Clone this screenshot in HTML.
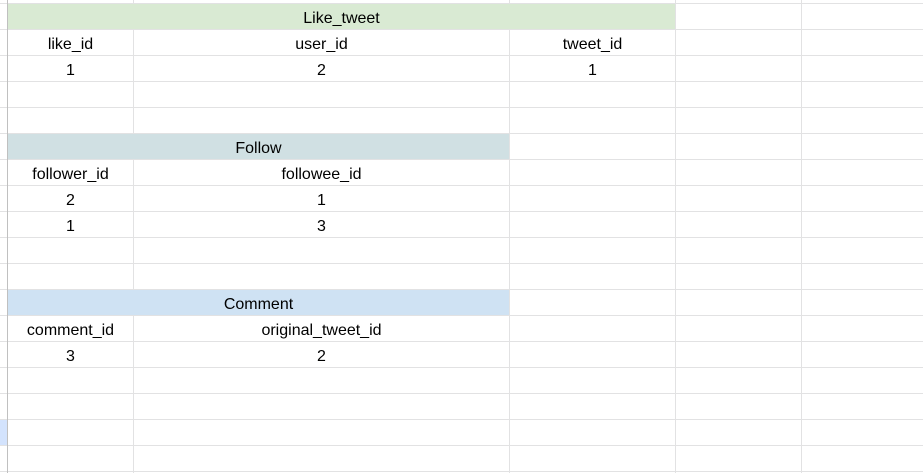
<!DOCTYPE html>
<html><head><style>
body{margin:0;width:923px;height:473px;overflow:hidden;background:#fff;position:relative;font-family:"Liberation Sans",Arial,sans-serif;font-size:16px;color:#000}
.hl{position:absolute;left:0;width:923px;height:1px;background:#e2e2e3}
.vl{position:absolute;top:0;width:1px;height:473px;background:#e2e2e3}
.b{position:absolute}
.t{position:absolute;height:25px;line-height:25px;text-align:center;white-space:nowrap;margin-top:2px}
</style></head><body>
<div class="hl" style="top:3px"></div><div class="hl" style="top:29px"></div><div class="hl" style="top:55px"></div><div class="hl" style="top:81px"></div><div class="hl" style="top:107px"></div><div class="hl" style="top:133px"></div><div class="hl" style="top:159px"></div><div class="hl" style="top:185px"></div><div class="hl" style="top:211px"></div><div class="hl" style="top:237px"></div><div class="hl" style="top:263px"></div><div class="hl" style="top:289px"></div><div class="hl" style="top:315px"></div><div class="hl" style="top:341px"></div><div class="hl" style="top:367px"></div><div class="hl" style="top:393px"></div><div class="hl" style="top:419px"></div><div class="hl" style="top:445px"></div><div class="hl" style="top:471px"></div>
<div class="vl" style="left:133px"></div><div class="vl" style="left:509px"></div><div class="vl" style="left:675px"></div><div class="vl" style="left:801px"></div>
<div class="b" style="left:0;top:420px;width:7px;height:25px;background:#d3e3fd"></div>
<div class="vl" style="left:7px;background:#c0c0c0"></div>
<div class="b" style="left:8px;top:4px;width:667px;height:25px;background:#d9ead3"></div>
<div class="b" style="left:8px;top:134px;width:501px;height:25px;background:#d0e0e3"></div>
<div class="b" style="left:8px;top:290px;width:501px;height:25px;background:#cfe2f3"></div>

<div class="t" style="left:8px;width:667px;top:4px">Like_tweet</div>
<div class="t" style="left:8px;width:125px;top:30px">like_id</div>
<div class="t" style="left:134px;width:375px;top:30px">user_id</div>
<div class="t" style="left:510px;width:165px;top:30px">tweet_id</div>
<div class="t" style="left:8px;width:125px;top:56px">1</div>
<div class="t" style="left:134px;width:375px;top:56px">2</div>
<div class="t" style="left:510px;width:165px;top:56px">1</div>

<div class="t" style="left:8px;width:501px;top:134px">Follow</div>
<div class="t" style="left:8px;width:125px;top:160px">follower_id</div>
<div class="t" style="left:134px;width:375px;top:160px">followee_id</div>
<div class="t" style="left:8px;width:125px;top:186px">2</div>
<div class="t" style="left:134px;width:375px;top:186px">1</div>
<div class="t" style="left:8px;width:125px;top:212px">1</div>
<div class="t" style="left:134px;width:375px;top:212px">3</div>

<div class="t" style="left:8px;width:501px;top:290px">Comment</div>
<div class="t" style="left:8px;width:125px;top:316px">comment_id</div>
<div class="t" style="left:134px;width:375px;top:316px">original_tweet_id</div>
<div class="t" style="left:8px;width:125px;top:342px">3</div>
<div class="t" style="left:134px;width:375px;top:342px">2</div>
</body></html>
